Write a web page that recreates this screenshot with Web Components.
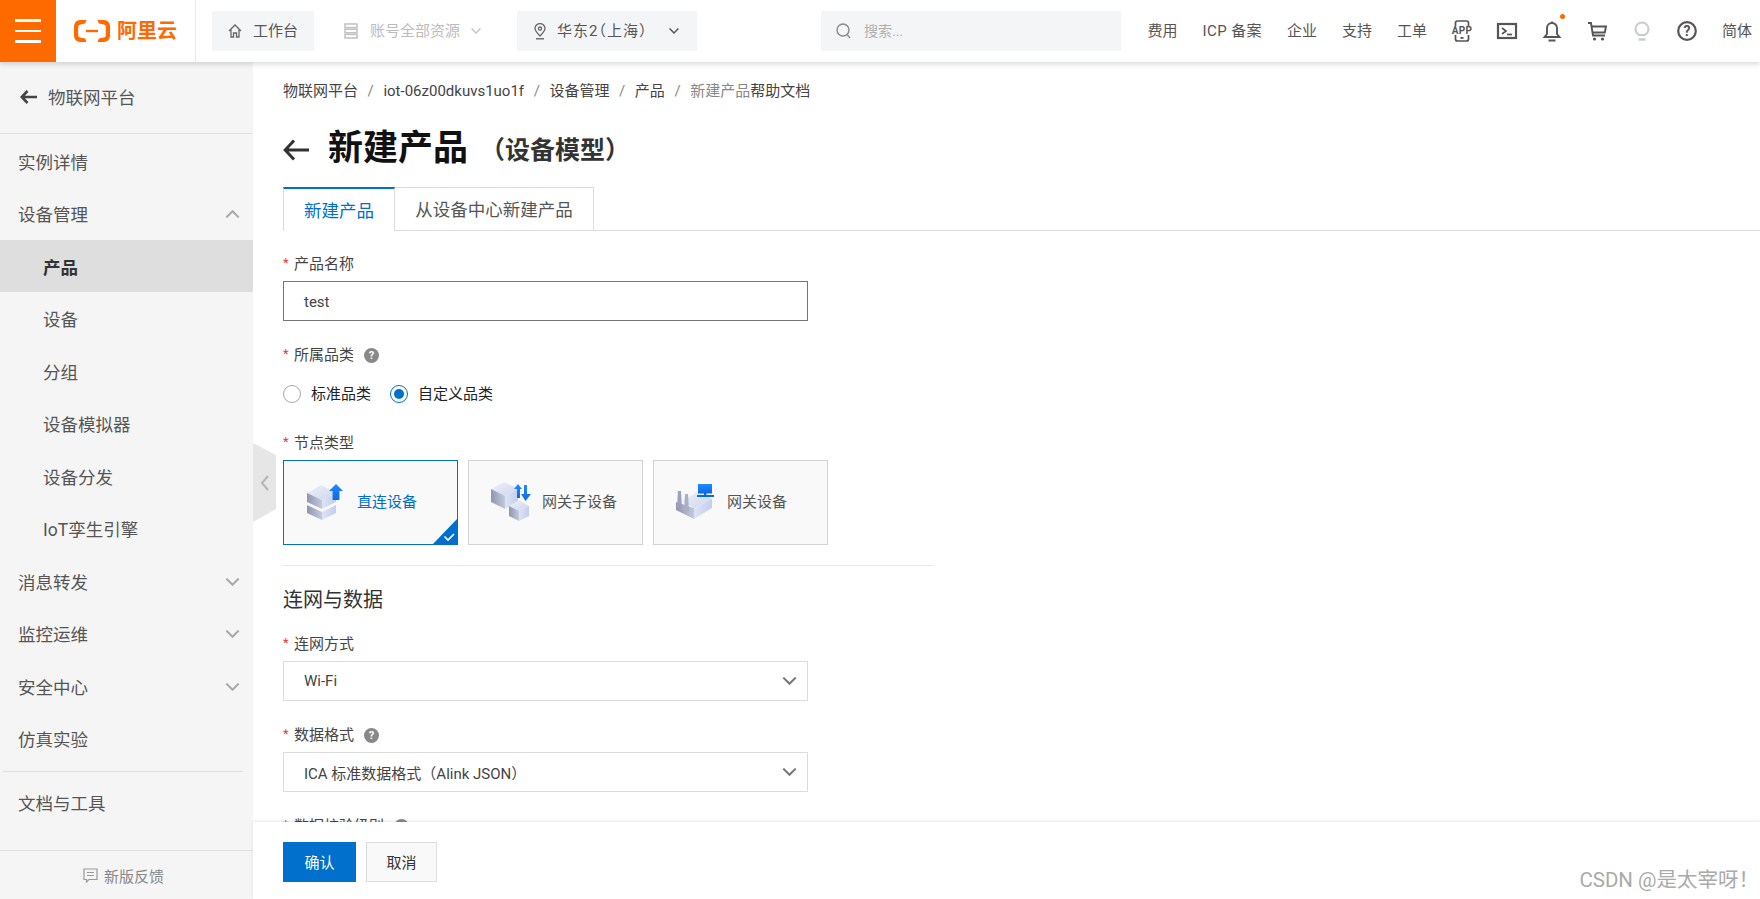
<!DOCTYPE html>
<html lang="zh-CN">
<head>
<meta charset="utf-8">
<title>新建产品</title>
<style>
  html, body { margin: 0; height: 100%; overflow: hidden; background: #fff; }
</style>
</head>
<body>
<app-shell>
  <top-bar slot="top"></top-bar>
  <side-nav slot="side">
    <side-item>实例详情</side-item>
    <side-item chevron="up">设备管理</side-item>
    <side-item sub active>产品</side-item>
    <side-item sub>设备</side-item>
    <side-item sub>分组</side-item>
    <side-item sub>设备模拟器</side-item>
    <side-item sub>设备分发</side-item>
    <side-item sub>IoT孪生引擎</side-item>
    <side-item chevron="down">消息转发</side-item>
    <side-item chevron="down">监控运维</side-item>
    <side-item chevron="down">安全中心</side-item>
    <side-item>仿真实验</side-item>
    <side-item slot="tools">文档与工具</side-item>
  </side-nav>
  <bread-crumb slot="main"></bread-crumb>
  <page-title slot="main" note="（设备模型）">新建产品</page-title>
  <tab-strip slot="main"></tab-strip>
  <product-form slot="main">
    <form-field label="产品名称"><text-box focus>test</text-box></form-field>
    <form-field label="所属品类" help>
      <radio-row>
        <radio-dot>标准品类</radio-dot>
        <radio-dot checked>自定义品类</radio-dot>
      </radio-row>
    </form-field>
    <form-field label="节点类型" tight>
      <card-row>
        <node-card kind="direct" selected>直连设备</node-card>
        <node-card kind="sub">网关子设备</node-card>
        <node-card kind="gateway">网关设备</node-card>
      </card-row>
    </form-field>
    <section-title>连网与数据</section-title>
    <form-field label="连网方式"><text-box arrow>Wi-Fi</text-box></form-field>
    <form-field label="数据格式" help><text-box arrow>ICA 标准数据格式（Alink JSON）</text-box></form-field>
    <form-field label="数据校验级别" help></form-field>
  </product-form>
  <form-footer slot="foot"></form-footer>
</app-shell>

<script>
const FONT_STACK = `Roboto, "Noto Sans CJK SC", sans-serif`;

const APP_SHELL_TEMPLATE = document.createElement('template');
APP_SHELL_TEMPLATE.innerHTML = `
  <style>
    :host { display: grid; grid-template-rows: 62px 1fr; height: 100vh; font-family: ${FONT_STACK}; color: #333; position: relative; overflow: hidden; }
    .top { position: relative; z-index: 3; box-shadow: 0 2px 5px rgba(0, 0, 0, 0.16); background: #fff; }
    .body { display: grid; grid-template-columns: 253px 1fr; min-height: 0; position: relative; }
    .main { display: grid; grid-template-rows: 760px 77px; min-width: 0; min-height: 0; }
    .scroll { overflow: hidden; padding-left: 30px; }
    .foot { position: relative; z-index: 1; box-shadow: 0 -1px 3px rgba(0, 0, 0, 0.1); background: #fff; }
    /* sidebar collapse tab, sits over the page edge */
    .collapse { position: absolute; left: 253px; top: 381px; width: 23px; height: 79px; }
    .collapse svg { display: block; }
    .watermark { position: absolute; right: 1px; bottom: 8px; z-index: 4; font-size: 20.5px; line-height: 22px; color: #aaa; }
  </style>
  <div class="top"><slot name="top"></slot></div>
  <div class="body">
    <slot name="side"></slot>
    <div class="main">
      <div class="scroll"><slot name="main"></slot></div>
      <div class="foot"><slot name="foot"></slot></div>
    </div>
    <div class="collapse">
      <svg width="23" height="79" viewBox="0 0 23 79"><path d="M0 0 L23 12 V66 L0 79Z" fill="#e6e6e6"/><path d="M15 33 L9 40 L15 47" fill="none" stroke="#b5b5b5" stroke-width="2"/></svg>
    </div>
  </div>
  <div class="watermark">CSDN @是太宰呀！</div>
`;

class AppShell extends HTMLElement {
  constructor() {
    super();
    this.attachShadow({ mode: 'open' });
    this.shadowRoot.appendChild(APP_SHELL_TEMPLATE.content.cloneNode(true));
  }
}

const CHEVRON = (w, h, color, up) => `<svg width="${w}" height="${h}" viewBox="0 0 14 8" fill="none" stroke="${color}" stroke-width="2">
  <path d="${up ? 'M.8 7.4 L7 1.2 L13.2 7.4' : 'M.8 .6 L7 6.8 L13.2 .6'}"/></svg>`;

const TOP_BAR_TEMPLATE = document.createElement('template');
TOP_BAR_TEMPLATE.innerHTML = `
  <style>
    :host { display: flex; align-items: center; height: 62px; font-size: 15px; color: #555; }
    svg { display: block; flex: none; }
    .burger { width: 56px; height: 62px; background: #ff6a00; display: flex; flex-direction: column; justify-content: center; align-items: center; gap: 8px; flex: none; }
    .burger i { display: block; width: 26px; height: 2.4px; background: #fff; }
    .logo { width: 121px; height: 62px; padding-left: 18px; border-right: 1px solid #e8e8e8; display: flex; align-items: center; gap: 7px; color: #ff6a00; font-size: 20px; font-weight: 700; line-height: 24px; flex: none; }
    .pill { height: 40px; box-sizing: border-box; display: flex; align-items: center; background: #f4f5f7; margin-left: 16px; padding-left: 16px; flex: none; white-space: nowrap; }
    .pill span:not(.ch), .right a, .lang { margin-top: -3px; }
    .home { width: 102px; gap: 11px; }
    .account { width: 171px; background: none; padding-left: 14px; gap: 12px; color: #bcbcbc; }
    .account .ch { margin-left: -1px; }
    .region { width: 180px; gap: 10px; }
    .region .name { font-feature-settings: "halt"; letter-spacing: 1px; }
    .region .ch { margin-left: 12px; }
    .search { width: 300px; margin-left: 124px; gap: 13px; padding-left: 15px; color: #b0b0b0; font-size: 14px; }
    .right { margin-left: auto; padding-right: 8px; display: flex; align-items: center; }
    .right a { white-space: nowrap; margin-right: 25px; }
    .right a.icp { letter-spacing: .4px; }
    .right a.last { margin-right: 24px; }
    .icon { width: 22px; height: 22px; margin-right: 23px; position: relative; }
    .dot { position: absolute; left: 19px; top: -6px; width: 5px; height: 5px; border-radius: 50%; background: #ff6a00; }
    .lang { white-space: nowrap; margin-left: 1px; }
  </style>
  <div class="burger"><i></i><i></i><i></i></div>
  <div class="logo">
    <svg width="36" height="22" viewBox="0 0 36 22" fill="#ff6a00">
      <path d="M12.5 0H6a6 6 0 0 0-6 6v10a6 6 0 0 0 6 6h6.5l-1.3-3.4-5-1a2.4 2.4 0 0 1-2-2.4V6.8a2.4 2.4 0 0 1 2-2.4l5-1z"/>
      <path d="M23.5 0H30a6 6 0 0 1 6 6v10a6 6 0 0 1-6 6h-6.5l1.3-3.4 5-1a2.4 2.4 0 0 0 2-2.4V6.8a2.4 2.4 0 0 0-2-2.4l-5-1z"/>
      <rect x="12" y="9.8" width="12" height="2.4"/>
    </svg>
    <span>阿里云</span>
  </div>
  <div class="pill home">
    <svg width="14" height="14" viewBox="0 0 14 14" fill="none" stroke="#666" stroke-width="1.3"><path d="M1 7 L7 1 L13 7 M3 5.5 V13 H5.5 V9 H8.5 V13 H11 V5.5"/></svg>
    <span>工作台</span>
  </div>
  <div class="pill account">
    <svg width="14" height="16" viewBox="0 0 14 16" fill="none" stroke="#c4c4c4" stroke-width="1.6"><rect x="1" y="1" width="12" height="3.6"/><rect x="1" y="6.2" width="12" height="3.6"/><rect x="1" y="11.4" width="12" height="3.6"/></svg>
    <span>账号全部资源</span>
    <span class="ch">${CHEVRON(10, 6, '#c4c4c4')}</span>
  </div>
  <div class="pill region">
    <svg width="14" height="17" viewBox="0 0 14 17" fill="none" stroke="#666" stroke-width="1.3"><path d="M7 13 C3.5 9.5 2 7.6 2 5.6 A5 5 0 0 1 12 5.6 C12 7.6 10.5 9.5 7 13Z"/><circle cx="7" cy="5.6" r="1.6"/><path d="M3 15.8 H11" stroke-width="1.4"/></svg>
    <span class="name">华东2（上海）</span>
    <span class="ch">${CHEVRON(10, 6, '#555')}</span>
  </div>
  <div class="pill search">
    <svg width="15" height="16" viewBox="0 0 15 16" fill="none" stroke="#8a8a8a" stroke-width="1.4"><circle cx="7" cy="7" r="6"/><path d="M11 11.4 L14 15"/></svg>
    <span>搜索...</span>
  </div>
  <div class="right">
    <a>费用</a><a class="icp">ICP 备案</a><a>企业</a><a>支持</a><a class="last">工单</a>
    <div class="icon">
      <svg width="22" height="22" viewBox="0 0 22 22"><rect x="4.5" y="1" width="13" height="20" rx="2" fill="none" stroke="#555" stroke-width="1.7"/><rect x="0" y="6" width="22" height="9" fill="#fff"/><text x="11" y="14.3" text-anchor="middle" font-size="10" font-weight="700" fill="#555" font-family="Roboto, sans-serif" letter-spacing=".3">APP</text><rect x="9.5" y="17" width="3" height="1.8" fill="#555"/></svg>
    </div>
    <div class="icon">
      <svg width="22" height="22" viewBox="0 0 22 22" fill="none" stroke="#555"><rect x="2" y="4" width="18" height="14" stroke-width="2.2"/><path d="M6 8 L10 11 L6 14" stroke-width="1.7"/><path d="M11 14.5 H16" stroke-width="1.7"/></svg>
    </div>
    <div class="icon">
      <svg width="22" height="22" viewBox="0 0 22 22" fill="none" stroke="#555" stroke-width="1.9"><path d="M3.5 17 H18.5 L16 14 V8 A5 5 0 0 0 6 8 V14Z"/><path d="M10.2 2.6 H11.8" stroke-width="2.4"/><path d="M7.5 20.5 H14.5" stroke-width="2"/></svg>
      <span class="dot"></span>
    </div>
    <div class="icon">
      <svg width="22" height="22" viewBox="0 0 22 22" fill="none" stroke="#555" stroke-width="1.9"><path d="M2 3 H5 L7 15.5 H19"/><path d="M5.6 6.5 H20 L18.8 12.5 H6.6"/><circle cx="8.5" cy="19" r="1.6" fill="#555" stroke="none"/><circle cx="16.5" cy="19" r="1.6" fill="#555" stroke="none"/></svg>
    </div>
    <div class="icon">
      <svg width="22" height="22" viewBox="0 0 22 22" fill="none" stroke="#c8ccd0" stroke-width="2"><path d="M8 15 C6 13.5 4.5 11.5 4.5 9 A6.5 6.5 0 0 1 17.5 9 C17.5 11.5 16 13.5 14 15 Z"/><path d="M7.5 19.5 H14.5" stroke-width="2.4"/></svg>
    </div>
    <div class="icon">
      <svg width="22" height="22" viewBox="0 0 22 22"><circle cx="11" cy="11" r="8.8" fill="none" stroke="#555" stroke-width="2.2"/><text x="11" y="16" text-anchor="middle" font-size="14" font-weight="700" fill="#555" font-family="Roboto, sans-serif">?</text></svg>
    </div>
    <span class="lang">简体</span>
  </div>
`;

class TopBar extends HTMLElement {
  constructor() {
    super();
    this.attachShadow({ mode: 'open' });
    this.shadowRoot.appendChild(TOP_BAR_TEMPLATE.content.cloneNode(true));
  }
}

const SIDE_NAV_TEMPLATE = document.createElement('template');
SIDE_NAV_TEMPLATE.innerHTML = `
  <style>
    :host { display: flex; flex-direction: column; width: 253px; height: 837px; background: #f5f5f5; }
    .head { height: 72px; box-sizing: border-box; border-bottom: 1px solid #e0e0e0; display: flex; align-items: center; gap: 11px; padding: 0 0 2px 20px; font-size: 17.5px; color: #555; flex: none; margin-bottom: .5px; }
    .rows { display: flex; flex-direction: column; flex: none; }
    .tools { margin: 6.5px 10px 0 3px; border-top: 1px solid #dedede; padding-top: 4px; flex: 1; }
    .feedback { height: 48px; border-top: 1px solid #e0e0e0; display: flex; align-items: center; justify-content: center; gap: 6px; font-size: 15px; color: #888; margin-top: auto; flex: none; padding-right: 6px; }
    svg { display: block; flex: none; }
  </style>
  <div class="head">
    <svg width="17" height="14" viewBox="0 0 17 14" fill="none" stroke="#444" stroke-width="2.6"><path d="M7.5 1 L1.8 7 L7.5 13 M1.8 7 H17"/></svg>
    <span>物联网平台</span>
  </div>
  <div class="rows"><slot></slot></div>
  <div class="tools"><slot name="tools"></slot></div>
  <div class="feedback">
    <svg width="15" height="15" viewBox="0 0 15 15" fill="none" stroke="#999" stroke-width="1.2"><path d="M1 1 H14 V11.5 H6 L3.5 14 V11.5 H1Z"/><path d="M4 4.5 H11 M4 7.5 H11"/></svg>
    <span>新版反馈</span>
  </div>
`;

class SideNav extends HTMLElement {
  constructor() {
    super();
    this.attachShadow({ mode: 'open' });
    this.shadowRoot.appendChild(SIDE_NAV_TEMPLATE.content.cloneNode(true));
  }
}

const SIDE_ITEM_TEMPLATE = document.createElement('template');
SIDE_ITEM_TEMPLATE.innerHTML = `
  <style>
    :host { display: flex; align-items: center; height: 52.5px; padding: 0 13px 0 18px; font-size: 17.5px; color: #555; white-space: nowrap; }
    :host([slot="tools"]) { height: 52px; margin-left: -3px; }
    :host([sub]) { padding-left: 43px; }
    :host([active]) { background: #dedede; color: #333; font-weight: 700; }
    .label { flex: 1; padding-top: 1px; }
    .chevron { padding-top: 2px; }
    svg { display: block; }
  </style>
  <span class="label"><slot></slot></span>
  <span class="chevron"></span>
`;

class SideItem extends HTMLElement {
  constructor() {
    super();
    this.attachShadow({ mode: 'open' });
    this.shadowRoot.appendChild(SIDE_ITEM_TEMPLATE.content.cloneNode(true));
  }

  connectedCallback() {
    const chevron = this.getAttribute('chevron');
    if (chevron) {
      this.shadowRoot.querySelector('.chevron').innerHTML = CHEVRON(15, 8, '#a8a8a8', chevron === 'up');
    }
  }
}

const BREAD_CRUMB_TEMPLATE = document.createElement('template');
BREAD_CRUMB_TEMPLATE.innerHTML = `
  <style>
    :host { display: flex; gap: 9.6px; height: 22px; margin-top: 18px; font-size: 15px; line-height: 22px; color: #444; white-space: nowrap; }
    .sep { color: #888; }
    .muted { color: #888; }
  </style>
  <span>物联网平台</span><span class="sep">/</span>
  <span>iot-06z00dkuvs1uo1f</span><span class="sep">/</span>
  <span>设备管理</span><span class="sep">/</span>
  <span>产品</span><span class="sep">/</span>
  <span><span class="muted">新建产品</span>帮助文档</span>
`;

class BreadCrumb extends HTMLElement {
  constructor() {
    super();
    this.attachShadow({ mode: 'open' });
    this.shadowRoot.appendChild(BREAD_CRUMB_TEMPLATE.content.cloneNode(true));
  }
}

const PAGE_TITLE_TEMPLATE = document.createElement('template');
PAGE_TITLE_TEMPLATE.innerHTML = `
  <style>
    :host { display: flex; align-items: center; height: 46px; margin: 25px 0 14px; white-space: nowrap; }
    svg { display: block; margin-right: 19px; }
    h1 { margin: -2px 0 0; font-size: 35px; line-height: 46px; font-weight: 700; color: #111; }
    .note { font-size: 25px; font-weight: 700; color: #333; margin-left: 12px; padding-bottom: 5px; }
  </style>
  <svg width="26" height="22" viewBox="0 0 26 22" fill="none" stroke="#333" stroke-width="3"><path d="M11 1.5 L2.2 11 L11 20.5 M2.2 11 H26"/></svg>
  <h1><slot></slot></h1>
  <span class="note"></span>
`;

class PageTitle extends HTMLElement {
  constructor() {
    super();
    this.attachShadow({ mode: 'open' });
    this.shadowRoot.appendChild(PAGE_TITLE_TEMPLATE.content.cloneNode(true));
  }

  connectedCallback() {
    this.shadowRoot.querySelector('.note').textContent = this.getAttribute('note') || '';
  }
}

const TAB_STRIP_TEMPLATE = document.createElement('template');
TAB_STRIP_TEMPLATE.innerHTML = `
  <style>
    :host { display: flex; height: 44px; box-sizing: border-box; border-bottom: 1px solid #dcdcdc; font-size: 17.5px; white-space: nowrap; }
    .tab { box-sizing: border-box; height: 44px; display: flex; align-items: center; justify-content: center; border: 1px solid #dcdcdc; border-left: 0; color: #555; padding-bottom: 2px; }
    .on { width: 112px; border: 1px solid #dcdcdc; border-top: 2px solid #0070cc; border-bottom: 0; color: #0070cc; background: #fff; }
    .off { width: 199px; height: 43px; border-bottom: 0; }
  </style>
  <div class="tab on">新建产品</div>
  <div class="tab off">从设备中心新建产品</div>
`;

class TabStrip extends HTMLElement {
  constructor() {
    super();
    this.attachShadow({ mode: 'open' });
    this.shadowRoot.appendChild(TAB_STRIP_TEMPLATE.content.cloneNode(true));
  }
}

const PRODUCT_FORM_TEMPLATE = document.createElement('template');
PRODUCT_FORM_TEMPLATE.innerHTML = `
  <style>
    :host { display: block; padding-top: 21px; }
  </style>
  <slot></slot>
`;

class ProductForm extends HTMLElement {
  constructor() {
    super();
    this.attachShadow({ mode: 'open' });
    this.shadowRoot.appendChild(PRODUCT_FORM_TEMPLATE.content.cloneNode(true));
  }
}

const FORM_FIELD_TEMPLATE = document.createElement('template');
FORM_FIELD_TEMPLATE.innerHTML = `
  <style>
    :host { display: block; margin-bottom: 22px; }
    :host([tight]) { margin-bottom: 0; }
    .label { display: flex; align-items: center; height: 22px; margin-bottom: 7px; font-size: 15px; color: #444; white-space: nowrap; }
    .star { color: #e23c39; width: 11px; font-size: 13px; margin-top: -2px; }
    .text { margin-top: -2px; }
    .help { display: none; width: 15px; height: 15px; border-radius: 50%; background: #888; color: #fff; font-size: 11px; font-weight: 700; line-height: 15px; text-align: center; margin-left: 10px; margin-top: 2px; }
    :host([help]) .help { display: block; }
  </style>
  <div class="label"><span class="star">*</span><span class="text"></span><span class="help">?</span></div>
  <slot></slot>
`;

class FormField extends HTMLElement {
  constructor() {
    super();
    this.attachShadow({ mode: 'open' });
    this.shadowRoot.appendChild(FORM_FIELD_TEMPLATE.content.cloneNode(true));
  }

  connectedCallback() {
    this.shadowRoot.querySelector('.text').textContent = this.getAttribute('label') || '';
  }
}

const TEXT_BOX_TEMPLATE = document.createElement('template');
TEXT_BOX_TEMPLATE.innerHTML = `
  <style>
    :host { display: flex; align-items: center; justify-content: space-between; box-sizing: border-box; width: 525px; height: 40px; padding: 0 10px 0 20px; border: 1px solid #dcdcdc; background: #fff; font-size: 15px; color: #444; white-space: nowrap; }
    :host([focus]) { border-color: #767676; padding-top: 2px; }
    svg { display: block; }
  </style>
  <span><slot></slot></span>
  <span class="arrow"></span>
`;

class TextBox extends HTMLElement {
  constructor() {
    super();
    this.attachShadow({ mode: 'open' });
    this.shadowRoot.appendChild(TEXT_BOX_TEMPLATE.content.cloneNode(true));
  }

  connectedCallback() {
    if (this.hasAttribute('arrow')) {
      this.shadowRoot.querySelector('.arrow').innerHTML = CHEVRON(15, 8, '#777');
    }
  }
}

const RADIO_ROW_TEMPLATE = document.createElement('template');
RADIO_ROW_TEMPLATE.innerHTML = `
  <style>
    :host { display: flex; align-items: center; gap: 19px; height: 30px; padding-top: 7px; }
  </style>
  <slot></slot>
`;

class RadioRow extends HTMLElement {
  constructor() {
    super();
    this.attachShadow({ mode: 'open' });
    this.shadowRoot.appendChild(RADIO_ROW_TEMPLATE.content.cloneNode(true));
  }
}

const RADIO_DOT_TEMPLATE = document.createElement('template');
RADIO_DOT_TEMPLATE.innerHTML = `
  <style>
    :host { display: flex; align-items: center; gap: 10px; font-size: 15px; color: #222; white-space: nowrap; }
    .dot { box-sizing: border-box; width: 18px; height: 18px; border-radius: 50%; border: 1px solid #a8a8a8; background: #fff; display: flex; align-items: center; justify-content: center; }
    .text { margin-top: -3px; }
    :host([checked]) .dot { border-color: #0070cc; }
    :host([checked]) .dot::after { content: ""; width: 10px; height: 10px; border-radius: 50%; background: #0070cc; }
  </style>
  <span class="dot"></span>
  <span class="text"><slot></slot></span>
`;

class RadioDot extends HTMLElement {
  constructor() {
    super();
    this.attachShadow({ mode: 'open' });
    this.shadowRoot.appendChild(RADIO_DOT_TEMPLATE.content.cloneNode(true));
  }
}

const CARD_ROW_TEMPLATE = document.createElement('template');
CARD_ROW_TEMPLATE.innerHTML = `
  <style>
    :host { display: flex; gap: 10px; }
  </style>
  <slot></slot>
`;

class CardRow extends HTMLElement {
  constructor() {
    super();
    this.attachShadow({ mode: 'open' });
    this.shadowRoot.appendChild(CARD_ROW_TEMPLATE.content.cloneNode(true));
  }
}

const BOX_DEFS = `
  <defs>
    <linearGradient id="top" x1="0" y1="0" x2="1" y2="1"><stop offset="0" stop-color="#eef1fa"/><stop offset="1" stop-color="#cdd5ee"/></linearGradient>
    <linearGradient id="left" x1="0" y1="0" x2="1" y2="0"><stop offset="0" stop-color="#8f96ad"/><stop offset="1" stop-color="#c3cadf"/></linearGradient>
    <linearGradient id="right" x1="0" y1="0" x2="1" y2="0"><stop offset="0" stop-color="#dde3f6"/><stop offset="1" stop-color="#c4cdeb"/></linearGradient>
    <linearGradient id="blue" x1="0" y1="0" x2="0" y2="1"><stop offset="0" stop-color="#1f8bff"/><stop offset="1" stop-color="#0a6ae6"/></linearGradient>
  </defs>`;

const NODE_ICONS = {
  direct: `<svg width="36" height="37" viewBox="0 0 36 37">${BOX_DEFS}
    <path d="M0 22 L15 29 V37 L0 30Z" fill="url(#left)"/><path d="M15 29 L29 22 V30 L15 37Z" fill="url(#right)"/>
    <path d="M0 10 L14 2 L29 10 L15 17Z" fill="url(#top)"/><path d="M0 10 L15 17 V26 L0 19Z" fill="url(#left)"/><path d="M15 17 L29 10 V19 L15 26Z" fill="url(#right)"/>
    <path d="M29 1 L36 8 H32.4 V17 H25.6 V8 H22Z" fill="url(#blue)"/>
  </svg>`,
  sub: `<svg width="40" height="39" viewBox="0 0 40 39">${BOX_DEFS}
    <path d="M0 7 L13 0 L27 7 L14 14Z" fill="url(#top)"/><path d="M0 7 L14 14 V27 L0 20Z" fill="url(#left)"/><path d="M14 14 L27 7 V20 L14 27Z" fill="url(#right)"/>
    <path d="M18 24 L28 18 L38 24 L28 29Z" fill="url(#top)"/><path d="M18 24 L28 29 V39 L18 34Z" fill="url(#left)"/><path d="M28 29 L38 24 V34 L28 39Z" fill="url(#right)"/>
    <path d="M27 3 L31 8 H29 V17 H26 V8 H23Z" fill="url(#blue)" transform="translate(0 -1)"/><path d="M33 3 H36 V12 H40 L34.5 19 L30 12 H33Z" fill="url(#blue)"/>
  </svg>`,
  gateway: `<svg width="39" height="35" viewBox="0 0 39 35">${BOX_DEFS}
    <path d="M7 17 L24 7 L37 15 L19 24Z" fill="url(#top)"/><path d="M1 18 L19 24 V35 L1 26Z" fill="url(#left)"/><path d="M19 24 L37 15 V24 L19 35Z" fill="url(#right)"/>
    <path d="M3 7 H6 L7 24 H2Z" fill="#9aa1b8"/><path d="M10 10 H13 L14 27 H9Z" fill="#a9b0c6"/>
    <rect x="23" y="0" width="14" height="9.5" fill="url(#blue)"/><rect x="29" y="9" width="2.4" height="2" fill="#0a6ae6"/><rect x="22" y="11" width="17" height="2" fill="#0a6ae6"/>
  </svg>`
};

const NODE_CARD_TEMPLATE = document.createElement('template');
NODE_CARD_TEMPLATE.innerHTML = `
  <style>
    :host { display: flex; align-items: center; box-sizing: border-box; position: relative; width: 175px; height: 85px; border: 1px solid #d2d2d2; background: #f9f9f9; font-size: 15px; color: #555; white-space: nowrap; }
    :host([selected]) { border-color: #0070cc; color: #0070cc; }
    svg { display: block; }
    .text { margin-top: -4px; }
    .icon { flex: none; display: flex; align-items: center; justify-content: center; }
    :host([kind="direct"]) .icon { margin: -2px 14px 0 23px; }
    :host([kind="sub"]) .icon { margin: -2px 11px 0 22px; }
    :host([kind="gateway"]) .icon { margin: -2px 13px 0 21px; }
    .corner { display: none; position: absolute; right: -1px; bottom: -1px; }
    :host([selected]) .corner { display: block; }
  </style>
  <span class="icon"></span>
  <span class="text"><slot></slot></span>
  <svg class="corner" width="26" height="27" viewBox="0 0 26 27"><path d="M26 0 V27 H0Z" fill="#0070cc"/><path d="M12.5 18.5 L16 22 L22 16" fill="none" stroke="#fff" stroke-width="1.6"/></svg>
`;

class NodeCard extends HTMLElement {
  constructor() {
    super();
    this.attachShadow({ mode: 'open' });
    this.shadowRoot.appendChild(NODE_CARD_TEMPLATE.content.cloneNode(true));
  }

  connectedCallback() {
    this.shadowRoot.querySelector('.icon').innerHTML = NODE_ICONS[this.getAttribute('kind')] || '';
  }
}

const SECTION_TITLE_TEMPLATE = document.createElement('template');
SECTION_TITLE_TEMPLATE.innerHTML = `
  <style>
    :host { display: block; width: 650px; margin-top: 20px; padding-top: 20px; border-top: 1px solid #e8e8e8; font-size: 20px; line-height: 28px; color: #333; margin-bottom: 18px; }
  </style>
  <slot></slot>
`;

class SectionTitle extends HTMLElement {
  constructor() {
    super();
    this.attachShadow({ mode: 'open' });
    this.shadowRoot.appendChild(SECTION_TITLE_TEMPLATE.content.cloneNode(true));
  }
}

const FORM_FOOTER_TEMPLATE = document.createElement('template');
FORM_FOOTER_TEMPLATE.innerHTML = `
  <style>
    :host { display: flex; gap: 10px; height: 77px; box-sizing: border-box; padding: 20px 0 0 30px; }
    button { box-sizing: border-box; height: 40px; font: inherit; font-size: 15px; border: 1px solid #0070cc; background: #0070cc; color: #fff; padding: 0 0 2px; cursor: pointer; }
    .ok { width: 73px; }
    .cancel { width: 71px; background: #f9f9f9; border-color: #dcdcdc; color: #333; }
  </style>
  <button class="ok" type="button">确认</button>
  <button class="cancel" type="button">取消</button>
`;

class FormFooter extends HTMLElement {
  constructor() {
    super();
    this.attachShadow({ mode: 'open' });
    this.shadowRoot.appendChild(FORM_FOOTER_TEMPLATE.content.cloneNode(true));
  }
}

customElements.define('app-shell', AppShell);
customElements.define('top-bar', TopBar);
customElements.define('side-nav', SideNav);
customElements.define('side-item', SideItem);
customElements.define('bread-crumb', BreadCrumb);
customElements.define('page-title', PageTitle);
customElements.define('tab-strip', TabStrip);
customElements.define('product-form', ProductForm);
customElements.define('form-field', FormField);
customElements.define('text-box', TextBox);
customElements.define('radio-row', RadioRow);
customElements.define('radio-dot', RadioDot);
customElements.define('card-row', CardRow);
customElements.define('node-card', NodeCard);
customElements.define('section-title', SectionTitle);
customElements.define('form-footer', FormFooter);
</script>
</body>
</html>
